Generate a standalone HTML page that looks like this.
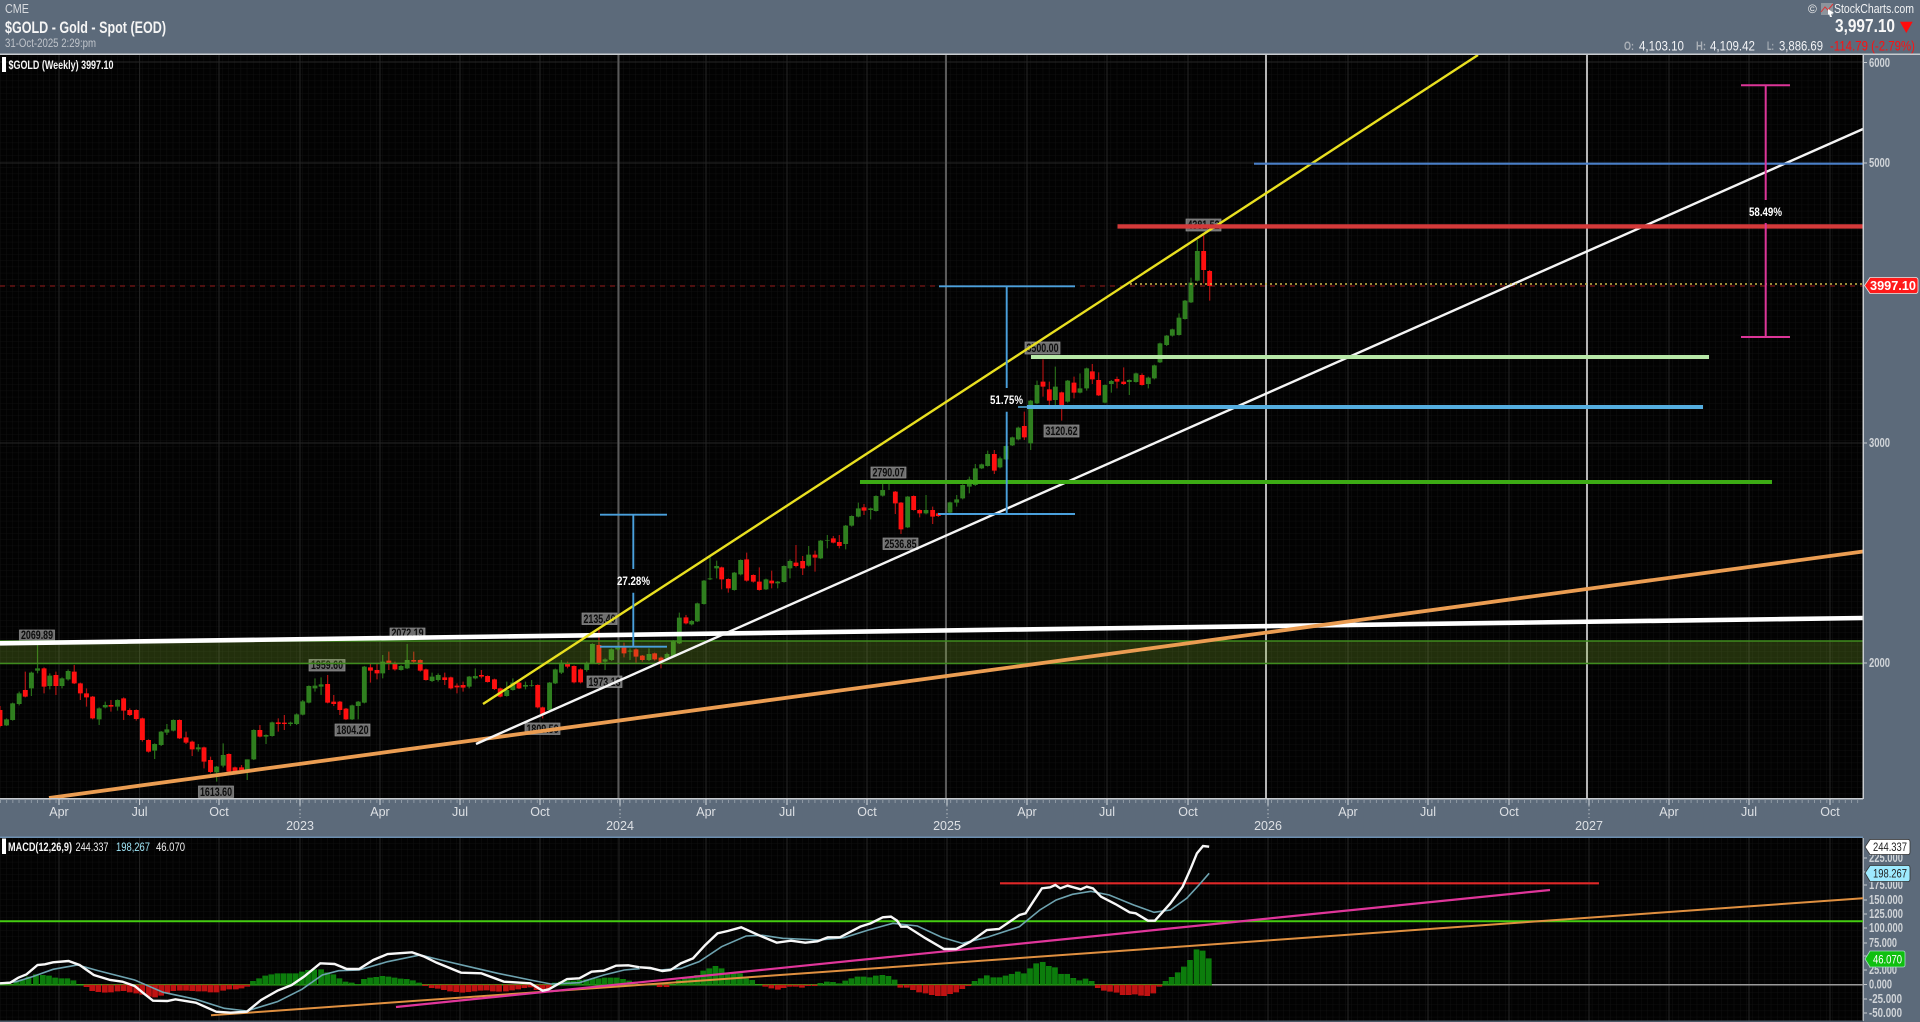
<!DOCTYPE html>
<html><head><meta charset="utf-8"><title>$GOLD - Gold - Spot (EOD)</title>
<style>
html,body{margin:0;padding:0;background:#5c6a7a;overflow:hidden}
svg{display:block;filter:blur(.35px)}
text{font-family:"Liberation Sans",sans-serif}
.ax{font-size:12.5px;fill:#dde0e4}
.px{font-size:12.5px;fill:#d0d4d8;font-weight:bold}
.lb{font-size:11.5px;font-weight:bold;fill:#0c0c0c}
.pc{font-size:11.5px;font-weight:bold;fill:#fff}
.lbb{fill:#6f6f6f;stroke:#949494;stroke-width:.7}
.gw{fill:none;stroke:#2a6e1a}.gb{fill:none;stroke:#2f7f1f}
.rw{fill:none;stroke:#b01414}.rb{fill:none;stroke:#ff1010}
</style></head><body>
<svg xmlns="http://www.w3.org/2000/svg" width="1920" height="1022" viewBox="0 0 1920 1022">
<defs>
<pattern id="g" patternUnits="userSpaceOnUse" width="6.17" height="6.2"><path d="M0 0V6.2M0 0H6.17" stroke="#121212" stroke-width=".8" fill="none"/></pattern>
<pattern id="t" patternUnits="userSpaceOnUse" width="6.17" height="4"><path d="M.5 0V3" stroke="#9aa4ae" stroke-width=".8"/></pattern>
</defs>
<rect width="1920" height="1022" fill="#5c6a7a"/>
<!-- panels -->
<rect x="0" y="55" width="1863" height="744" fill="#020202"/>
<rect x="0" y="55" width="1863" height="744" fill="url(#g)"/>
<rect x="0" y="838" width="1863" height="183" fill="#020202"/>
<rect x="0" y="838" width="1863" height="183" fill="url(#g)"/>
<!-- grid majors main -->
<path d="M59 55V799M139.6 55V799M219 55V799M300 55V799M380 55V799M460 55V799M540 55V799M706 55V799M787 55V799M867 55V799M1027 55V799M1107 55V799M1188 55V799M1348 55V799M1428 55V799M1509 55V799M1669 55V799M1749 55V799M1830 55V799" stroke="#262626" stroke-width="1" fill="none"/>
<path d="M0 62H1863M0 163H1863M0 443H1863M0 663H1863" stroke="#262626" stroke-width="1" fill="none"/>
<path d="M59 838V1021M139.6 838V1021M219 838V1021M300 838V1021M380 838V1021M460 838V1021M540 838V1021M619 838V1021M706 838V1021M787 838V1021M867 838V1021M947 838V1021M1027 838V1021M1107 838V1021M1188 838V1021M1268 838V1021M1348 838V1021M1428 838V1021M1509 838V1021M1589 838V1021M1669 838V1021M1749 838V1021M1830 838V1021" stroke="#262626" stroke-width="1" fill="none"/>
<!-- year lines -->
<path d="M618.5 55V799M946 55V799" stroke="#5a5a5a" stroke-width="2" fill="none"/>
<path d="M1266 55V799M1587 55V799" stroke="#b5b5b5" stroke-width="2" fill="none"/>
<!-- dashed last -->
<path d="M0 286H1863" stroke="#7a1515" stroke-width="1.2" stroke-dasharray="5 5" fill="none"/>
<!-- value labels -->
<g>
<rect class="lbb" x="19.5" y="630" width="35" height="11"/><text class="lb" x="21" y="639" textLength="32" lengthAdjust="spacingAndGlyphs">2069.89</text>
<rect class="lbb" x="390" y="628" width="35" height="11"/><text class="lb" x="391.5" y="637" textLength="32" lengthAdjust="spacingAndGlyphs">2072.19</text>
<rect class="lbb" x="309" y="659.5" width="36" height="11.5"/><text class="lb" x="311" y="669" textLength="32" lengthAdjust="spacingAndGlyphs">1959.60</text>
<rect class="lbb" x="335" y="724" width="35" height="12"/><text class="lb" x="336.5" y="734" textLength="32" lengthAdjust="spacingAndGlyphs">1804.20</text>
<rect class="lbb" x="525" y="723" width="35" height="11.5"/><text class="lb" x="526.5" y="733" textLength="32" lengthAdjust="spacingAndGlyphs">1809.50</text>
<rect class="lbb" x="198.5" y="786" width="35" height="11.5"/><text class="lb" x="200" y="796" textLength="32" lengthAdjust="spacingAndGlyphs">1613.60</text>
<rect class="lbb" x="587" y="676" width="35" height="11.5"/><text class="lb" x="588.5" y="686" textLength="32" lengthAdjust="spacingAndGlyphs">1973.13</text>
<rect class="lbb" x="582" y="613" width="35" height="11.5"/><text class="lb" x="583.5" y="623" textLength="32" lengthAdjust="spacingAndGlyphs">2135.40</text>
<rect class="lbb" x="883" y="538" width="35" height="11.5"/><text class="lb" x="884.5" y="548" textLength="32" lengthAdjust="spacingAndGlyphs">2536.85</text>
<rect class="lbb" x="871" y="467" width="35" height="11"/><text class="lb" x="872.5" y="476.5" textLength="32" lengthAdjust="spacingAndGlyphs">2790.07</text>
<rect class="lbb" x="1044" y="425" width="35" height="12"/><text class="lb" x="1045.5" y="435" textLength="32" lengthAdjust="spacingAndGlyphs">3120.62</text>
<rect class="lbb" x="1025" y="342" width="35" height="12"/><text class="lb" x="1026.5" y="352" textLength="32" lengthAdjust="spacingAndGlyphs">3500.00</text>
<rect class="lbb" x="1186" y="219" width="35" height="12"/><text class="lb" x="1187.5" y="229" textLength="32" lengthAdjust="spacingAndGlyphs">4381.52</text>
</g>
<!-- candles A -->
<g transform="translate(0,620) scale(.408,.33333)">
<path class="gw" stroke-width="3" d="M16 295V318M31 248V302M47 215V256M77 155V228M92 75V160M122 160V208M152 172V205M167 148V182M243 262V315M258 245V265M288 238V272M379 370V417M395 333V378M409 312V345M425 298V334M486 372V395M531 438V485M547 370V442M606 418V480M622 328V420M652 343V372M667 305V350M712 305V318M727 280V315M742 240V286M757 196V250M772 175V215M787 172V225M863 254V300M878 243V298M893 138V250M938 105V175M983 135V152M998 72V147M1059 158V186M1074 160V185M1150 168V205M1165 145V178M1242 185V230M1257 175V212M1288 185V208M1303 180V200M1347 186V272M1361 146V192M1376 120V162M1438 125V155M1452 70V132M1483 115V150M1498 86V120"/>
<path class="rw" stroke-width="3" d="M0 258V322M62 155V232M108 142V220M137 155V225M182 135V192M197 188V240M212 205V260M227 228V298M272 240V275M303 232V300M318 265V288M334 268V302M349 293V365M364 358V398M440 298V357M456 335V372M471 362V408M500 380V445M516 410V460M561 400V460M576 440V462M592 435V458M637 315V352M682 295V335M697 285V330M803 165V250M818 225V258M833 243V285M848 264V300M908 130V188M924 130V178M953 95V150M968 125V152M1014 95V130M1030 118V155M1044 146V182M1090 158V195M1105 170V208M1120 190V220M1135 185V215M1180 150V175M1195 166V188M1212 176V210M1226 203V232M1272 185V207M1318 193V265M1330 260V295M1391 125V145M1407 136V190M1423 145V190M1468 25V135"/>
<path class="gb" stroke-width="12" d="M16 298V316M31 250V300M47 220V252M77 158V205M92 145V152M122 167V198M152 175V198M167 153V178M243 265V298M258 255V262M288 240V260M379 372V392M395 335V375M409 328V338M425 300V332M486 382V388M531 440V457M547 405V437M606 418V450M622 330V418M652 345V350M667 307V348M712 308V312M727 283V312M742 244V284M757 198V248M772 197V205M787 193V200M863 256V298M878 245V258M893 140V248M938 125V160M983 138V150M998 120V145M1059 170V183M1074 165V180M1150 170V200M1165 168V175M1242 210V228M1257 188V210M1288 195V200M1303 195V197M1347 188V270M1361 148V190M1376 128V158M1438 130V150M1452 72V130M1483 118V125M1498 88V118"/>
<path class="rb" stroke-width="12" d="M0 270V318M62 210V230M108 145V200M137 165V198M182 155V190M197 190V220M212 220V232M227 230V295M272 255V260M303 235V272M318 270V285M334 270V297M349 295V360M364 360V395M440 300V355M456 352V368M471 365V388M500 382V425M516 420V456M561 402V455M576 442V455M592 442V450M637 330V350M682 307V312M697 308V312M803 192V248M818 245V252M833 245V270M848 266V298M908 142V152M924 150V160M953 122V130M968 132V148M1014 120V125M1030 120V152M1044 148V180M1090 172V180M1105 172V205M1120 197V202M1135 195V203M1180 165V170M1195 168V186M1212 178V207M1226 205V230M1272 188V205M1318 195V262M1330 262V282M1391 130V140M1407 138V187M1423 148V187M1468 75V132"/>
</g>
<!-- candles B -->
<g transform="translate(520,480) scale(.33333)">
<path class="gw" stroke-width="3.5" d="M275 505V543M293 498V512M330 505V540M387 505V543M441 518V540M460 480V532M478 398V492M515 420V436M532 368V426M552 300V374M570 230V300M590 242V295M643 276V332M662 238V286M738 296V330M773 303V325M792 256V308M810 238V295M866 198V260M902 180V237M922 165V205M977 135V208M995 106V140M1015 68V112M1052 83V118M1068 46V95M1088 12V50M1107 5V30M1163 48V144M1218 45V103"/>
<path class="rw" stroke-width="3.5" d="M312 488V532M348 505V548M367 525V545M404 518V542M423 530V565M498 405V433M605 260V328M625 295V338M680 218V305M700 283V308M718 262V332M755 272V325M828 195V262M848 228V285M885 212V275M940 168V190M958 165V205M1032 72V105M1126 33V102M1143 66V162M1181 46V92M1199 88V112M1238 80V132M1255 98V111"/>
<path class="gb" stroke-width="14.500" d="M275 508V540M293 503V508M330 512V515M387 522V540M441 522V535M460 482V528M478 413V490M515 423V433M532 370V424M552 302V372M570 295V298M590 258V265M643 278V330M662 240V283M738 298V328M773 305V310M792 258V306M810 243V265M866 224V257M902 182V235M922 180V182M977 137V192M995 108V137M1015 85V110M1052 85V90M1068 48V93M1088 30V47M1107 8V12M1163 50V142M1218 90V100"/>
<path class="rb" stroke-width="14.500" d="M312 503V520M348 508V530M367 527V540M404 520V538M423 533V545M498 412V430M605 262V298M625 297V325M680 238V302M700 285V305M718 305V330M755 302V310M828 248V258M848 243V265M885 224V233M940 175V188M958 186V198M1032 82V92M1126 35V70M1143 68V148M1181 48V90M1199 90V100M1238 90V110M1255 100V108"/>
</g>
<!-- candles C -->
<g transform="translate(860,360) scale(.33333)">
<path class="gw" stroke-width="3.5" d="M270 425V460M290 405V440M308 373V418M328 350V400M346 312V378M365 311V327M383 272V320M420 290V325M438 256V300M457 230V258M475 200V241"/>
<path class="rw" stroke-width="3.5" d="M403 270V342M493 155V240"/>
<path class="gb" stroke-width="14.500" d="M270 427V458M290 418V428M308 375V415M328 358V380M346 325V375M365 313V325M383 282V318M420 295V322M438 258V298M457 232V256M475 203V238"/>
<path class="rb" stroke-width="14.500" d="M403 282V332M493 198V232"/>
</g>
<!-- candles D -->
<g transform="translate(1000,210) scale(.33333)">
<path class="gw" stroke-width="3.5" d="M92 570V720M111 512V582M166 470V585M203 510V578M240 490V550M260 473V542M315 523V580M334 510V548M388 508V555M408 488V518M445 500V535M463 464V508M480 398V459M500 375V408M517 356V380M537 310V377M555 270V329M573 203V279M592 90V214"/>
<path class="rw" stroke-width="3.5" d="M129 448V560M148 515V585M185 545V632M222 500V565M277 462V522M296 487V558M351 500V535M371 472V525M426 490V527M611 70V220M629 180V272"/>
<path class="gb" stroke-width="14.500" d="M92 572V700M111 525V580M166 530V570M203 512V575M240 535V548M260 475V535M315 525V578M334 513V522M388 510V516M408 490V516M445 503V522M463 466V505M480 400V457M500 377V405M517 358V377M537 323V375M555 272V327M573 218V277M592 123V212"/>
<path class="rb" stroke-width="14.500" d="M129 515V530M148 538V572M185 547V590M222 518V548M277 484V508M296 510V556M351 507V515M371 515V522M426 495V525M611 123V180M629 183V228"/>
</g>
<!-- zone -->
<rect x="0" y="641" width="1863" height="22.5" fill="rgb(140,193,47)" fill-opacity=".24"/>
<path d="M0 641H1863M0 663.5H1863" stroke="#3f8c1e" stroke-width="1.5" fill="none"/>
<!-- trend lines -->
<path d="M0 643.3L1863 618" stroke="#fff" stroke-width="4.6" fill="none"/>
<path d="M49 798L1863 551.5" stroke="#eb9d52" stroke-width="3.8" fill="none"/>
<path d="M476 744L1863 129" stroke="#f5f5f5" stroke-width="2.4" fill="none"/>
<path d="M483 704L1478 55" stroke="#e9e020" stroke-width="2.4" fill="none"/>
<path d="M1117.5 226.4H1863" stroke="#d43a3a" stroke-width="4.4" fill="none"/>
<path d="M1254 163.7H1863" stroke="#4a7fc8" stroke-width="2.2" fill="none"/>
<path d="M1130 284H1863" stroke="#c9b84a" stroke-width="1.6" stroke-dasharray="2 3" fill="none"/>
<path d="M1031 357H1709" stroke="#b8e8a8" stroke-width="4" fill="none"/>
<path d="M1018 407H1027" stroke="#55aee0" stroke-width="1.5" fill="none"/>
<path d="M1027 407H1703" stroke="#55aee0" stroke-width="4" fill="none"/>
<path d="M860 482H1772" stroke="#3caa14" stroke-width="4" fill="none"/>
<!-- measures -->
<path d="M600 514.7H667M633.3 514.7V569M633.3 592.7V646.7M600 646.7H667" stroke="#4aa0dc" stroke-width="1.9" fill="none"/>
<path d="M939 286.3H1075M1006.7 286.3V388M1006.7 411.7V514M938 514H1075" stroke="#4aa0dc" stroke-width="1.9" fill="none"/>
<path d="M1741 85.3H1790M1765.7 85.3V200M1765.7 223V337M1741 337H1790" stroke="#dc3598" stroke-width="2" fill="none"/>
<text class="pc" x="617" y="585" textLength="33" lengthAdjust="spacingAndGlyphs">27.28%</text>
<text class="pc" x="990" y="404" textLength="33" lengthAdjust="spacingAndGlyphs">51.75%</text>
<text class="pc" x="1749" y="216" textLength="33" lengthAdjust="spacingAndGlyphs">58.49%</text>
<!-- frame -->
<rect x="0" y="53.5" width="1920" height="1.5" fill="#c8ccd0"/>
<rect x="0" y="798" width="1863" height="1.5" fill="#c8ccd0"/>
<rect x="1862.5" y="54" width="1.5" height="745" fill="#c8ccd0"/>
<rect x="0" y="836.5" width="1863" height="1.5" fill="#6d8fb0"/>
<rect x="1862.5" y="838" width="1.5" height="183" fill="#aeb4ba"/>
<rect x="0" y="1020.5" width="1863" height="1.5" fill="#4d5a68"/>
<!-- x axis -->
<rect x="0" y="799.5" width="1863" height="4" fill="url(#t)"/>
<path d="M59 799V805M139.6 799V805M219 799V805M300 799V805M380 799V805M460 799V805M540 799V805M620 799V805M706 799V805M787 799V805M867 799V805M947 799V805M1027 799V805M1107 799V805M1188 799V805M1268 799V805M1348 799V805M1428 799V805M1509 799V805M1589 799V805M1669 799V805M1749 799V805M1830 799V805" stroke="#d5d9dd" stroke-width="1" fill="none"/>
<path d="M300 805V818M620 805V818M947 805V818M1268 805V818M1589 805V818" stroke="#b8bec4" stroke-width="1" stroke-dasharray="1.5 2.5" fill="none"/>
<g text-anchor="middle">
<text class="ax" x="59" y="816">Apr</text><text class="ax" x="139.6" y="816">Jul</text><text class="ax" x="219" y="816">Oct</text><text class="ax" x="380" y="816">Apr</text><text class="ax" x="460" y="816">Jul</text><text class="ax" x="540" y="816">Oct</text><text class="ax" x="706" y="816">Apr</text><text class="ax" x="787" y="816">Jul</text><text class="ax" x="867" y="816">Oct</text><text class="ax" x="1027" y="816">Apr</text><text class="ax" x="1107" y="816">Jul</text><text class="ax" x="1188" y="816">Oct</text><text class="ax" x="1348" y="816">Apr</text><text class="ax" x="1428" y="816">Jul</text><text class="ax" x="1509" y="816">Oct</text><text class="ax" x="1669" y="816">Apr</text><text class="ax" x="1749" y="816">Jul</text><text class="ax" x="1830" y="816">Oct</text>
<text class="ax" x="300" y="830">2023</text><text class="ax" x="620" y="830">2024</text><text class="ax" x="947" y="830">2025</text><text class="ax" x="1268" y="830">2026</text><text class="ax" x="1589" y="830">2027</text>
</g>
<!-- y axis -->
<path d="M1864 62.5H1867M1864 163H1867M1864 443H1867M1864 663H1867" stroke="#c8ccd0" stroke-width="1" fill="none"/>
<text class="px" x="1869" y="67" textLength="21" lengthAdjust="spacingAndGlyphs">6000</text>
<text class="px" x="1869" y="167" textLength="21" lengthAdjust="spacingAndGlyphs">5000</text>
<text class="px" x="1869" y="447" textLength="21" lengthAdjust="spacingAndGlyphs">3000</text>
<text class="px" x="1869" y="667" textLength="21" lengthAdjust="spacingAndGlyphs">2000</text>
<path d="M1864.5 285.5L1870 277.5H1915Q1918 277.5 1918 280V291Q1918 293.5 1915 293.5H1870Z" fill="#ff1a1a" stroke="#e8e8e8" stroke-width=".8"/>
<text x="1870" y="290" font-size="12.5" font-weight="bold" fill="#fff" textLength="46" lengthAdjust="spacingAndGlyphs">3997.10</text>
<!-- header -->
<text x="5" y="13" font-size="13" fill="#d8dbdf" textLength="24" lengthAdjust="spacingAndGlyphs">CME</text>
<text x="5" y="33" font-size="16.5" font-weight="bold" fill="#f5f5f5" textLength="161" lengthAdjust="spacingAndGlyphs">$GOLD - Gold - Spot (EOD)</text>
<text x="5" y="47" font-size="11.5" fill="#c0c5cb" textLength="91" lengthAdjust="spacingAndGlyphs">31-Oct-2025 2:29:pm</text>
<rect x="2" y="57" width="4" height="15" fill="#fff"/>
<text x="8.5" y="69" font-size="11.5" font-weight="bold" fill="#f5f5f5" textLength="105" lengthAdjust="spacingAndGlyphs">$GOLD (Weekly) 3997.10</text>
<text x="1808" y="13" font-size="12" fill="#eee">©</text>
<g><rect x="1821" y="3" width="12" height="12" fill="#8d949c"/><path d="M1821 12L1825 7L1828 10L1833 4" stroke="#d33" stroke-width="1" fill="none"/><path d="M1828 9L1834 13L1831 14L1832 17L1830 17L1829 14L1828 15Z" fill="#fff"/></g>
<text x="1834" y="13" font-size="13" fill="#f2f3f5" textLength="80" lengthAdjust="spacingAndGlyphs">StockCharts.com</text>
<text x="1835" y="32" font-size="18" font-weight="bold" fill="#f8f8f8" textLength="60" lengthAdjust="spacingAndGlyphs">3,997.10</text>
<path d="M1900 21.7H1912.7L1906.3 33Z" fill="#ff0c0c"/>
<text x="1624" y="50" font-size="12" font-weight="bold" fill="#aab0b7" textLength="10" lengthAdjust="spacingAndGlyphs">O:</text>
<text x="1639" y="50.5" font-size="13.5" fill="#f2f3f5" textLength="45" lengthAdjust="spacingAndGlyphs">4,103.10</text>
<text x="1696" y="50" font-size="12" font-weight="bold" fill="#aab0b7" textLength="10" lengthAdjust="spacingAndGlyphs">H:</text>
<text x="1710" y="50.5" font-size="13.5" fill="#f2f3f5" textLength="45" lengthAdjust="spacingAndGlyphs">4,109.42</text>
<text x="1767" y="50" font-size="12" font-weight="bold" fill="#aab0b7" textLength="7" lengthAdjust="spacingAndGlyphs">L:</text>
<text x="1779" y="50.5" font-size="13.5" fill="#f2f3f5" textLength="44" lengthAdjust="spacingAndGlyphs">3,886.69</text>
<text x="1830" y="50.5" font-size="13.5" fill="#ff1010" textLength="85" lengthAdjust="spacingAndGlyphs">-114.79 (-2.79%)</text>
<!-- MACD -->
<rect x="2" y="838.5" width="4" height="15.5" fill="#fff"/>
<text x="8" y="851" font-size="11.5" font-weight="bold" fill="#f5f5f5" textLength="64" lengthAdjust="spacingAndGlyphs">MACD(12,26,9)</text>
<text x="75.5" y="851" font-size="11.5" fill="#eee" textLength="33" lengthAdjust="spacingAndGlyphs">244.337</text>
<text x="116" y="851" font-size="11.5" fill="#9fe4f5" textLength="34" lengthAdjust="spacingAndGlyphs">198,267</text>
<text x="156" y="851" font-size="11.5" fill="#eee" textLength="29" lengthAdjust="spacingAndGlyphs">46.070</text>
<path d="M1212 984.7H1863" stroke="#9a9a9a" stroke-width="1.5" fill="none"/>
<path d="M0 984.7H1212" stroke="#35a01a" stroke-width="1.5" fill="none"/>
<g transform="translate(0,830) scale(.408,.33333)" fill="none" stroke-width="14">
<path stroke="#0c7d0c" d="M40 464V455M55 464V448M70 464V440M88 464V433M105 464V435M120 464V437M135 464V443M150 464V445M165 464V445M180 464V451M620 464V453M635 464V445M650 464V437M665 464V433M680 464V430M695 464V430M710 464V430M725 464V430M740 464V425M755 464V420M770 464V418M787 464V418M802 464V427M817 464V433M832 464V445M847 464V455M862 464V458M877 464V462M892 464V447M907 464V443M922 464V441M937 464V438M952 464V440M967 464V443M982 464V446M997 464V447M1012 464V451M1027 464V458M1360 464V458M1375 464V455M1390 464V452M1405 464V452M1420 464V450M1437 464V448M1452 464V445M1467 464V445M1482 464V443M1497 464V443M1512 464V443M1527 464V447M1542 464V452M1557 464V457"/>
<path stroke="#c01212" d="M212 464V471M226 464V483M241 464V486M257 464V488M272 464V487M288 464V484M303 464V483M318 464V487M334 464V490M349 464V494M365 464V500M380 464V502M395 464V497M410 464V490M425 464V483M441 464V482M456 464V482M471 464V483M486 464V484M501 464V484M516 464V487M531 464V487M547 464V482M562 464V478M578 464V478M592 464V475M606 464V470M1042 464V468M1058 464V474M1073 464V476M1088 464V480M1103 464V484M1118 464V486M1133 464V488M1148 464V486M1163 464V484M1178 464V482M1193 464V481M1208 464V484M1223 464V485M1240 464V484M1255 464V481M1270 464V478M1285 464V474M1300 464V472M1315 464V480M1330 464V484M1345 464V478"/>
</g>
<g transform="translate(640,830) scale(.408,.33333)" fill="none" stroke-width="14">
<path stroke="#0c7d0c" d="M95 464V450M110 464V445M125 464V440M140 464V435M155 464V422M170 464V415M185 464V408M200 464V415M215 464V428M230 464V430M245 464V430M260 464V445M275 464V450M442 464V459M458 464V455M473 464V456M488 464V460M503 464V452M518 464V445M533 464V440M548 464V440M563 464V442M578 464V437M594 464V435M609 464V438M624 464V449M820 464V453M835 464V445M850 464V436M866 464V442M881 464V442M896 464V437M911 464V432M926 464V425M941 464V430M956 464V415M971 464V400M987 464V396M1002 464V408M1017 464V412M1032 464V432M1047 464V432M1062 464V444M1077 464V451M1092 464V446M1107 464V453M1288 464V453M1303 464V441M1318 464V427M1333 464V410M1348 464V390M1364 464V358M1379 464V362M1394 464V385"/>
<path stroke="#c01212" d="M48 464V471M65 464V471M307 464V470M322 464V475M338 464V479M352 464V474M367 464V470M382 464V470M397 464V473M412 464V468M428 464V468M638 464V473M654 464V473M669 464V480M684 464V487M700 464V490M715 464V495M730 464V498M745 464V498M760 464V492M775 464V487M790 464V477M805 464V468M1122 464V474M1137 464V482M1152 464V485M1168 464V488M1183 464V495M1198 464V495M1213 464V493M1228 464V497M1243 464V498M1258 464V490M1273 464V470"/>
</g>
<path d="M0 921.3H1863" stroke="#44cc11" stroke-width="2" fill="none"/>
<path d="M1000 883.3H1599" stroke="#e02828" stroke-width="2.2" fill="none"/>
<path d="M211 1015.3L1863 898.3" stroke="#e09040" stroke-width="2" fill="none"/>
<path d="M396 1007L1550 890" stroke="#e0359a" stroke-width="2.2" fill="none"/>
<g transform="translate(0,830) scale(.408,.33333)" fill="none">
<polyline vector-effect="non-scaling-stroke" stroke="#6ea3b0" stroke-width="1.6" points="0,460 40,455 80,440 130,418 190,405 240,422 330,450 400,487 480,508 550,535 605,543 680,515 740,478 790,435 830,422 880,420 950,395 1030,375 1080,390 1150,410 1220,430 1300,450 1350,462 1420,458 1480,435 1530,420 1568,416"/>
<polyline vector-effect="non-scaling-stroke" stroke="#f8f8f8" stroke-width="2.4" points="0,460 25,458 45,443 65,433 92,405 110,403 130,397 168,393 195,405 230,435 270,450 300,455 330,468 352,490 375,512 410,513 430,508 480,518 530,545 565,548 605,545 640,510 680,482 715,465 745,440 785,400 820,402 850,417 880,417 915,390 950,372 1010,367 1040,380 1070,398 1130,428 1180,430 1235,455 1300,460 1330,482 1345,478 1390,447 1420,445 1450,425 1480,422 1510,407 1540,406 1568,412"/>
</g>
<g transform="translate(640,830) scale(.408,.33333)" fill="none">
<polyline vector-effect="non-scaling-stroke" stroke="#6ea3b0" stroke-width="1.6" points="0,412 50,420 100,415 145,395 200,350 260,318 300,316 350,325 440,330 500,323 560,300 620,280 680,288 740,322 790,340 850,322 930,290 980,240 1020,210 1060,193 1105,184 1150,195 1210,225 1260,247 1300,240 1340,205 1370,165 1395,130"/>
<polyline vector-effect="non-scaling-stroke" stroke="#f8f8f8" stroke-width="2.4" points="0,412 25,414 55,423 75,420 100,400 130,385 160,345 190,310 215,303 248,292 290,315 335,338 370,332 405,338 435,334 460,322 490,322 540,290 565,280 595,262 615,260 630,272 640,290 655,290 700,325 745,357 775,357 810,335 850,300 880,297 930,255 945,250 985,175 1005,172 1018,165 1030,175 1048,167 1080,178 1095,170 1110,175 1130,200 1165,222 1200,247 1215,250 1245,272 1262,272 1300,220 1330,170 1350,115 1365,70 1380,48 1395,50"/>
</g>
<!-- macd axis -->
<path d="M1864 858H1867M1864 872H1867M1864 885H1867M1864 900H1867M1864 914H1867M1864 928H1867M1864 943H1867M1864 956H1867M1864 970H1867M1864 984.5H1867M1864 999H1867M1864 1013H1867" stroke="#c8ccd0" stroke-width="1" fill="none"/>
<g>
<text class="px" x="1869" y="862" textLength="34" lengthAdjust="spacingAndGlyphs">225.000</text>
<text class="px" x="1869" y="889" textLength="34" lengthAdjust="spacingAndGlyphs">175.000</text>
<text class="px" x="1869" y="904" textLength="34" lengthAdjust="spacingAndGlyphs">150.000</text>
<text class="px" x="1869" y="918" textLength="34" lengthAdjust="spacingAndGlyphs">125.000</text>
<text class="px" x="1869" y="932" textLength="34" lengthAdjust="spacingAndGlyphs">100.000</text>
<text class="px" x="1869" y="947" textLength="28" lengthAdjust="spacingAndGlyphs">75.000</text>
<text class="px" x="1869" y="974" textLength="28" lengthAdjust="spacingAndGlyphs">25.000</text>
<text class="px" x="1869" y="988.5" textLength="23" lengthAdjust="spacingAndGlyphs">0.000</text>
<text class="px" x="1869" y="1003" textLength="33" lengthAdjust="spacingAndGlyphs">-25.000</text>
<text class="px" x="1869" y="1017" textLength="33" lengthAdjust="spacingAndGlyphs">-50.000</text>
</g>
<path d="M1865 847L1870 839.5H1908Q1910 839.5 1910 842V852Q1910 854.5 1908 854.5H1870Z" fill="#fff" stroke="#333" stroke-width=".8"/>
<text x="1873" y="851" font-size="12" fill="#222" textLength="34" lengthAdjust="spacingAndGlyphs">244.337</text>
<path d="M1865 873L1870 865.5H1908Q1910 865.5 1910 868V879Q1910 881.5 1908 881.5H1870Z" fill="#9eeaff" stroke="#333" stroke-width=".8"/>
<text x="1873" y="877.5" font-size="12" fill="#222" textLength="34" lengthAdjust="spacingAndGlyphs">198.267</text>
<path d="M1865 959L1870 951H1903Q1905 951 1905 953V965Q1905 967 1903 967H1870Z" fill="#0fc00f" stroke="#a8d8c8" stroke-width=".8"/>
<text x="1873" y="963.5" font-size="12" fill="#fff" textLength="29" lengthAdjust="spacingAndGlyphs">46.070</text>
</svg>
</body></html>
